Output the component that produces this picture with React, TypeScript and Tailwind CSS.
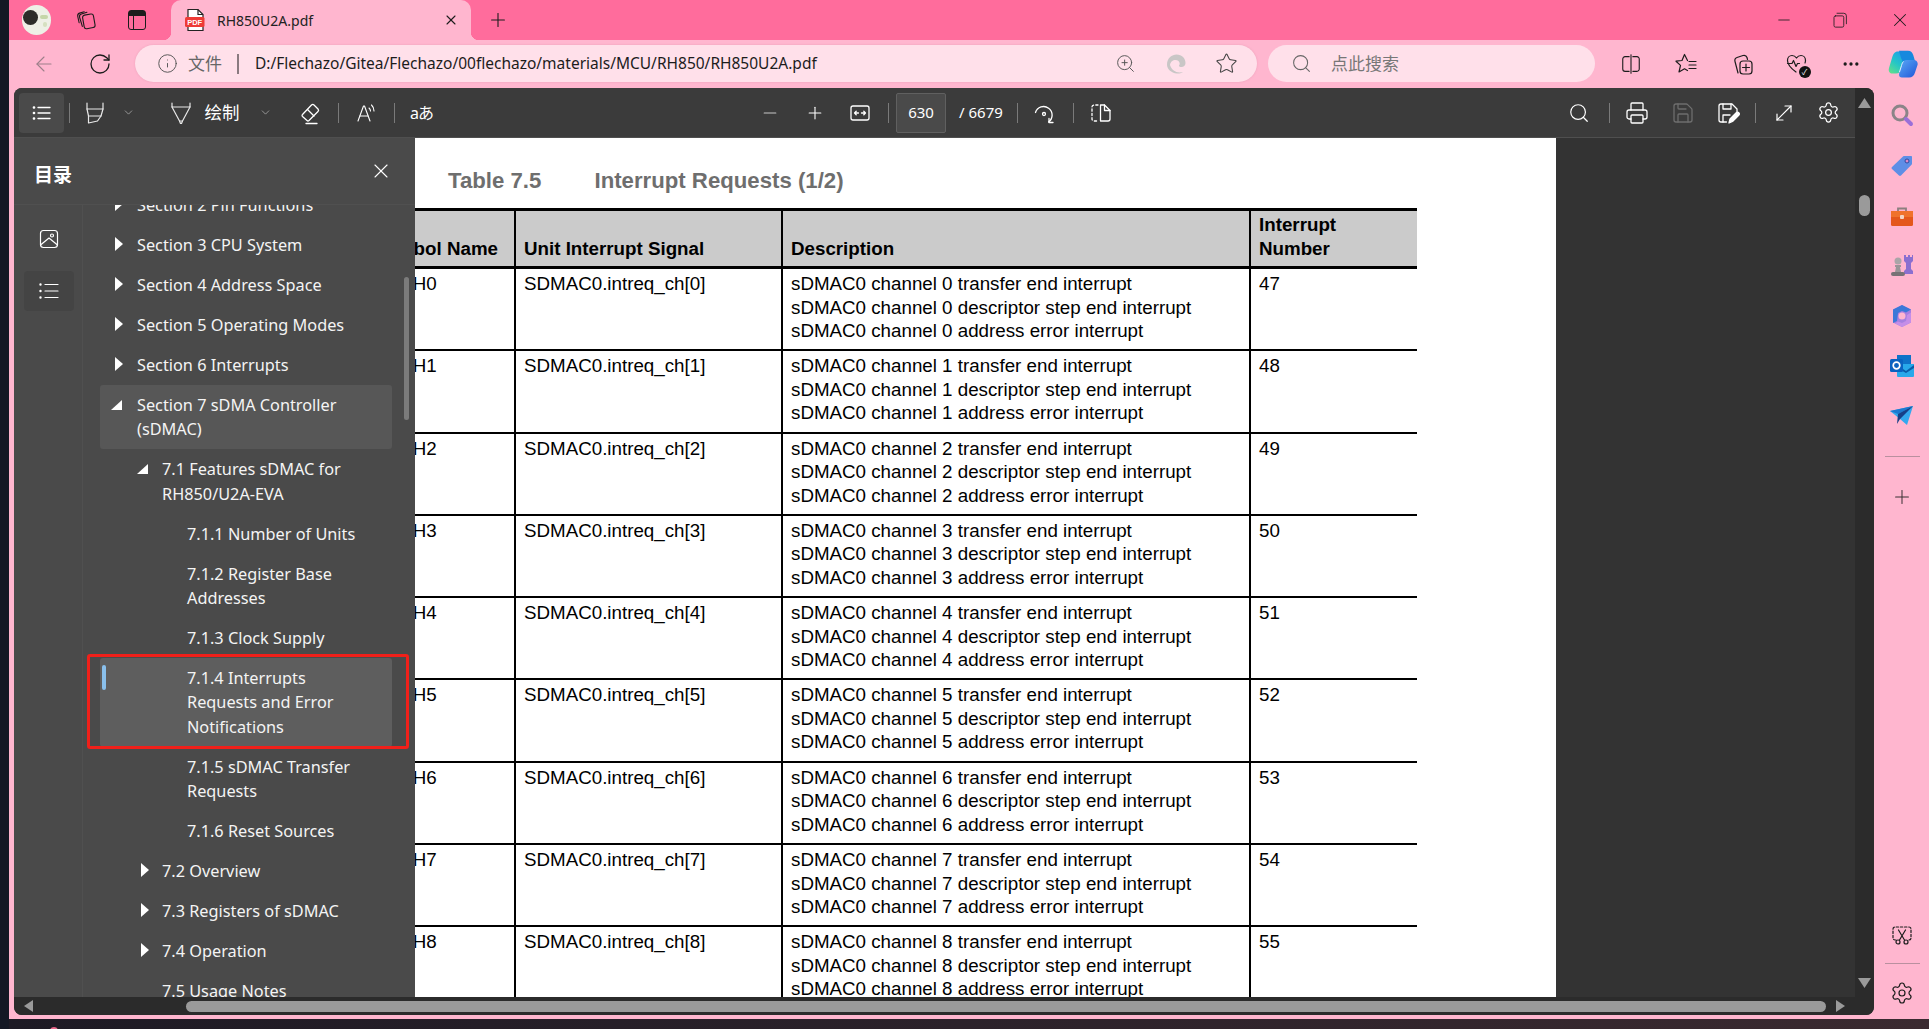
import React from "react";
import { Search, Printer, Save, MoveDiagonal, Settings, ChevronDown, Plus, Minus, X, ArrowLeft, RotateCw, Info, Star, ZoomIn, MoreHorizontal } from "lucide-react";

const UI = "font-['Noto_Sans','Noto_Sans_CJK_SC',sans-serif]";

type P = { className?: string; children?: React.ReactNode; size?: number; sw?: number };
const Ic = ({ className = "", children, size = 24, sw = 1.3 }: P) => (
  <svg width={size} height={size} viewBox="0 0 24 24" fill="none" stroke="currentColor" strokeWidth={sw} strokeLinecap="round" strokeLinejoin="round" className={"shrink-0 " + className}>
    {children}
  </svg>
);

const Sep = ({ className = "" }: { className?: string }) => <div className={"h-5 w-px shrink-0 bg-[#7a7a7a] " + className} />;

const Closed = () => (
  <svg width="8" height="14" viewBox="0 0 8 14" className="shrink-0 mt-[4px]"><polygon points="0,0 8,7 0,14" fill="#fff" /></svg>
);
const Open = () => (
  <svg width="11" height="10" viewBox="0 0 11 10" className="shrink-0 mt-[7px] -ml-[4px]"><polygon points="11,0 11,10 0,10" fill="#fff" /></svg>
);

type Item = { l: number; t: React.ReactNode; a?: "c" | "o"; bg?: string; mark?: boolean };
const items: Item[] = [
  { l: 0, a: "c", t: "Section 2 Pin Functions" },
  { l: 0, a: "c", t: "Section 3 CPU System" },
  { l: 0, a: "c", t: "Section 4 Address Space" },
  { l: 0, a: "c", t: "Section 5 Operating Modes" },
  { l: 0, a: "c", t: "Section 6 Interrupts" },
  { l: 0, a: "o", bg: "bg-[#575757]", t: <>Section 7 sDMA Controller<br />(sDMAC)</> },
  { l: 1, a: "o", t: <>7.1 Features sDMAC for<br />RH850/U2A-EVA</> },
  { l: 2, t: "7.1.1 Number of Units" },
  { l: 2, t: <>7.1.2 Register Base<br />Addresses</> },
  { l: 2, t: "7.1.3 Clock Supply" },
  { l: 2, bg: "bg-[#5e5e5e]", mark: true, t: <>7.1.4 Interrupts<br />Requests and Error<br />Notifications</> },
  { l: 2, t: <>7.1.5 sDMAC Transfer<br />Requests</> },
  { l: 2, t: "7.1.6 Reset Sources" },
  { l: 1, a: "c", t: "7.2 Overview" },
  { l: 1, a: "c", t: "7.3 Registers of sDMAC" },
  { l: 1, a: "c", t: "7.4 Operation" },
  { l: 1, t: "7.5 Usage Notes" },
];

const TocRow = ({ it }: { it: Item }) => (
  <div className={"relative flex rounded-[3px] py-[7.8px] " + (it.bg || "")}>
    {it.mark && <span className="absolute left-[2px] top-[7px] h-[25px] w-1 rounded-sm bg-[#8ac0ec]" />}
    <div className={(it.l === 0 ? "w-[37px] pl-[15px]" : it.l === 1 ? "w-[62px] pl-[41px]" : "w-[87px]") + " shrink-0 flex"}>
      {it.a === "c" && <Closed />}
      {it.a === "o" && <Open />}
    </div>
    <div className="whitespace-nowrap text-[16.3px] leading-[24.4px] text-[#f4f4f4]">{it.t}</div>
  </div>
);

const Panel = () => (
  <aside className={"relative flex h-full w-[401px] shrink-0 flex-col bg-[#4a4a4a] " + UI}>
    <div className="flex h-[67px] shrink-0 items-start justify-between border-b border-[#505050] pl-5 pr-[22px]">
      <div className="mt-[23px] text-[19px] font-bold leading-7 text-white">目录</div>
      <X size={24} strokeWidth={1.1} className="mt-[21px] text-white" />
    </div>
    <div className="flex min-h-0 flex-1">
      <div className="flex w-[69px] shrink-0 flex-col items-center border-r border-[#505050] pl-[1px] pt-[22px]">
        <Ic size={24} className="text-white" sw={1.2}>
          <rect x="3.5" y="3.5" width="17" height="17" rx="3" />
          <circle cx="15" cy="8.5" r="1.5" />
          <path d="M3.5 18l8.5-7 8.500 7" />
        </Ic>
        <div className="mt-[20px] flex h-10 w-[50px] items-center justify-center rounded bg-[#444444]">
          <Ic size={24} className="text-white" sw={1.2}>
            <path d="M8 5.5h13M8 12h13M8 18.5h13" />
            <circle cx="3.5" cy="5.5" r=".6" fill="currentColor" />
            <circle cx="3.5" cy="12" r=".6" fill="currentColor" />
            <circle cx="3.5" cy="18.5" r=".6" fill="currentColor" />
          </Ic>
        </div>
      </div>
      <div className="relative min-w-0 flex-1 overflow-hidden px-[17px]">
        <div className="-mt-[20px] w-[292px]">
          {items.map((it, i) => <TocRow key={i} it={it} />)}
        </div>
        <div className="absolute right-[6px] top-[72px] h-[143px] w-[5px] rounded-full bg-[#7b7b7b]" />
        <div className="absolute left-[4px] top-[449px] h-[95px] w-[322px] rounded-[3px] border-[3px] border-[#f0201a]" />
      </div>
    </div>
  </aside>
);

const rows = Array.from({ length: 9 }, (_, i) => i);
const cell = "border-r-2 border-black pl-2";

const PdfPage = () => (
  <div className="h-full w-[1141px] shrink-0 overflow-hidden bg-white font-['Liberation_Sans',sans-serif] text-[18.75px] leading-[23.5px] text-black">
    <div className="flex pl-[33px] pt-[30px] text-[22.2px] font-bold leading-[26px] text-[#6e6e6e]">
      <span className="w-[146.5px]">Table 7.5</span>
      <span>Interrupt Requests (1/2)</span>
    </div>
    <div className="-ml-[49px] mt-[14px] w-[1051px]">
      <div className="grid h-[61px] grid-cols-[150px_267px_468px_166px] border-y-[3px] border-black bg-[#cbcbcb] font-bold">
        <div className="flex items-end border-r-2 border-black pb-[6px] pl-[8px] whitespace-nowrap">Symbol Name</div>
        <div className={"flex items-end pb-[6px] " + cell}>Unit Interrupt Signal</div>
        <div className={"flex items-end pb-[6px] " + cell}>Description</div>
        <div className="flex flex-col justify-end pb-[6px] pl-2"><span>Interrupt</span><span>Number</span></div>
      </div>
      {rows.map((i) => (
        <div key={i} className="grid h-[82.3px] grid-cols-[150px_267px_468px_166px] border-b-2 border-black">
          <div className="overflow-hidden whitespace-nowrap border-r-2 border-black pl-[3px] pt-[3px]">INTCH{i}</div>
          <div className={"pt-[3px] " + cell}>SDMAC0.intreq_ch[{i}]</div>
          <div className={"pt-[3px] " + cell}>
            <div>sDMAC0 channel {i} transfer end interrupt</div>
            <div>sDMAC0 channel {i} descriptor step end interrupt</div>
            <div>sDMAC0 channel {i} address error interrupt</div>
          </div>
          <div className="pl-2 pt-[3px]">{47 + i}</div>
        </div>
      ))}
    </div>
  </div>
);

const ViewerToolbar = () => (
  <div className={"flex h-[50px] shrink-0 items-center border-b border-[#4f4f4f] bg-[#3b3b3b] pl-[5px] text-white " + UI}>
    <div className="flex h-10 w-[45px] shrink-0 items-center justify-center rounded bg-[#4a4a4a]">
      <Ic size={24} sw={1.3}>
        <path d="M8 6.5h12M8 12h12M8 17.5h12" />
        <circle cx="4" cy="6.5" r=".7" fill="currentColor" />
        <circle cx="4" cy="12" r=".7" fill="currentColor" />
        <circle cx="4" cy="17.5" r=".7" fill="currentColor" />
      </Ic>
    </div>
    <Sep className="ml-[5px]" />
    <Ic className="ml-[13px] text-[#e8e8e8]" sw={1.2}>
      <path d="M4 2v6h16V2" />
      <path d="M4 8l1.500 7h12.500l2-7" />
      <path d="M5.500 15v7l9-2 3.500-5" />
    </Ic>
    <ChevronDown size={13} strokeWidth={1.1} className="ml-[15px] shrink-0 text-[#cfcfcf]" />
    <Ic className="ml-[33.5px] text-[#e8e8e8]" sw={1.2}>
      <path d="M3 2v4h18V2" />
      <path d="M3 6l7.500 14h3L21 6" />
      <path d="M10.500 20l1 2.500h1l1-2.500" />
    </Ic>
    <span className="ml-[12px] w-[36px] shrink-0 whitespace-nowrap text-[17.5px] leading-none">绘制</span>
    <ChevronDown size={13} strokeWidth={1.1} className="ml-[18px] shrink-0 text-[#cfcfcf]" />
    <Ic className="ml-[26px]">
      <path d="M4.500 13.500L13.500 4a1.800 1.800 0 0 1 2.500 0l4 4a1.800 1.800 0 0 1 0 2.500L11 19.500a1.500 1.500 0 0 1-2 0l-4.500-4a1.400 1.400 0 0 1 0-2z" />
      <path d="M9.500 8.500l6.500 6.500" />
      <path d="M8 22.500h11" />
    </Ic>
    <Sep className="ml-[16.5px]" />
    <Ic className="ml-[14.5px]" sw={1.1}>
      <path d="M4 20L9.500 5h1L16 20" />
      <path d="M6 15h8" />
      <path d="M15 7a4 4 0 0 1 1.500 3M17.500 4a8 8 0 0 1 2.500 6" />
    </Ic>
    <Sep className="ml-[16.5px]" />
    <span className="ml-[15px] w-[24px] shrink-0 whitespace-nowrap text-[16px] leading-none tracking-[-1px]">aあ</span>
    <Minus size={20} strokeWidth={1.3} className="ml-[325.5px] shrink-0 text-[#c8c8c8]" />
    <Plus size={20} strokeWidth={1.3} className="ml-[25px] shrink-0" />
    <Ic className="ml-[23.5px]">
      <rect x="3" y="5" width="18" height="14" rx="2" />
      <path d="M6.500 12h4M6.500 12l1.700-1.700M6.500 12l1.700 1.700M17.500 12h-4M17.500 12l-1.700-1.700M17.500 12l-1.700 1.700" />
    </Ic>
    <Sep className="ml-[16px] w-0.5" />
    <div className="ml-[7px] flex h-10 w-[50px] shrink-0 items-center justify-center rounded-[2px] border border-[#606060] bg-[#4a4a4a] text-[15px]">630</div>
    <span className="ml-[13px] w-[42px] shrink-0 whitespace-nowrap text-[15px]">/ 6679</span>
    <Sep className="ml-[15.5px]" />
    <Ic className="ml-[14.5px]">
      <path d="M3.500 11.500a8.500 8.500 0 1 1 13 9.500" />
      <path d="M17 17.500v4h4" />
      <circle cx="12" cy="13" r="1.500" />
    </Ic>
    <Sep className="ml-[17px] w-0.5" />
    <Ic className="ml-[15px]">
      <path d="M9 4H5a2 2 0 0 0-2 2v12a2 2 0 0 0 2 2h4" strokeDasharray="2.200 2.200" />
      <path d="M11.500 4v16h7.500a2 2 0 0 0 2-2V9.500L15.500 4z" />
      <path d="M15.500 4v5.500H21" />
    </Ic>
    <Search size={22} strokeWidth={1.3} className="ml-[455px] shrink-0" />
    <Sep className="ml-[19px] w-0.5" />
    <Printer size={24} strokeWidth={1.3} className="ml-[15px] shrink-0" />
    <Save size={24} strokeWidth={1.3} className="ml-[21.5px] shrink-0 text-[#6e6e6e]" />
    <Ic className="ml-[21.5px]" sw={1.3}>
      <path d="M10.500 21H5a2 2 0 0 1-2-2V5a2 2 0 0 1 2-2h11l5 5v3" />
      <path d="M7 3v5h8V3M7 21v-7h7" />
      <path d="M13 22l1-4 6.500-6.500a1.800 1.800 0 0 1 2.500 2.500L16.500 20.500z" fill="currentColor" />
    </Ic>
    <Sep className="ml-[15px]" />
    <MoveDiagonal size={24} strokeWidth={1.2} className="ml-[16px] shrink-0" />
    <Settings size={23} strokeWidth={1.3} className="ml-[20.5px] shrink-0" />
  </div>
);

const Tri = ({ pts, className = "" }: { pts: string; className?: string }) => (
  <svg width="13" height="12" viewBox="0 0 13 12" className={"shrink-0 " + className}><polygon points={pts} fill="#9a9a9a" /></svg>
);

const Viewer = () => (
  <div className="flex h-[927px] w-[1860px] shrink-0 flex-col overflow-hidden rounded-lg bg-[#2b2b2b]">
    <div className="flex min-h-0 flex-1">
      <div className="flex min-w-0 flex-1 flex-col">
        <ViewerToolbar />
        <div className="flex min-h-0 flex-1 bg-[#333333]">
          <Panel />
          <PdfPage />
        </div>
      </div>
      <div className="flex w-[19px] shrink-0 flex-col items-center bg-[#2b2b2b] pt-[10px]">
        <Tri pts="6.5,0 13,10 0,10" />
        <div className="mt-[85px] h-[21px] w-[11px] rounded-full bg-[#9a9a9a]" />
        <div className="flex-1" />
        <Tri pts="0,0 13,0 6.5,10" className="mb-[7px]" />
      </div>
    </div>
    <div className="flex h-[18px] shrink-0 items-center bg-[#2b2b2b] pl-[10px]">
      <svg width="9" height="12" viewBox="0 0 9 12" className="shrink-0"><polygon points="9,0 9,12 0,6" fill="#9a9a9a" /></svg>
      <div className="ml-[153px] h-[11px] w-[1640px] rounded-full bg-[#9a9a9a]" />
      <svg width="9" height="12" viewBox="0 0 9 12" className="ml-[10px] shrink-0"><polygon points="0,0 9,6 0,12" fill="#9a9a9a" /></svg>
    </div>
  </div>
);

const TabBar = () => (
  <div className={"flex h-10 shrink-0 items-center bg-[#ff6c9c] text-[#1c1c1c] " + UI}>
    <div className="relative ml-[13px] h-[30px] w-[29px] shrink-0 overflow-hidden rounded-full bg-[#eef0e6]">
      <div className="absolute left-[1px] top-[5px] h-[15px] w-[15px] rounded-full bg-[#2d2d2a]" />
      <div className="absolute left-[18px] top-[10px] h-[4px] w-[8px] rounded-full bg-[#c5d6a8]" />
      <div className="absolute left-[21px] top-[17px] h-[5px] w-[4px] rounded-full bg-[#d5e0c0]" />
    </div>
    <Ic size={22} className="ml-[24px]" sw={1.2}>
      <rect x="9" y="6" width="12" height="15" rx="2.500" transform="rotate(-10 15 13)" />
      <path d="M8 19L5 9c-.4-1.500.4-3 2-3.500L13 3.500" />
      <path d="M4.500 15L3 8c-.3-1.500.5-3 2-3.500L10 3" />
    </Ic>
    <div className="ml-[31px] flex h-[20px] w-[18px] shrink-0 flex-col rounded-[3px] border-[1.5px] border-[#1c1c1c]">
      <div className="h-[5px] bg-[#1c1c1c]" />
      <div className="w-[5px] flex-1 border-r border-[#1c1c1c]" />
    </div>
    <div className="relative ml-[25px] flex h-10 w-[300px] shrink-0 items-center rounded-t-[10px] bg-[#ffb6cf]">
      <span className="absolute -left-2 bottom-0 h-2 w-2 bg-[radial-gradient(circle_at_0_0,#ff6c9c_8px,#ffb6cf_8.5px)]" />
      <span className="absolute -right-2 bottom-0 h-2 w-2 bg-[radial-gradient(circle_at_100%_0,#ff6c9c_8px,#ffb6cf_8.5px)]" />
      <svg width="20" height="24" viewBox="0 0 20 24" className="ml-[14px] shrink-0">
        <path d="M3 1.500h10l5 5V22.500H3z" fill="#fff" stroke="#222" strokeWidth="1.200" />
        <path d="M13 1.500v5h5" fill="none" stroke="#222" strokeWidth="1.200" />
        <rect x="0" y="9" width="19.500" height="10" rx="1.500" fill="#ee3b36" />
        <text x="9.700" y="16.800" textAnchor="middle" fontSize="7.500" fontWeight="700" fill="#fff" fontFamily="Liberation Sans">PDF</text>
      </svg>
      <span className="ml-[12px] whitespace-nowrap text-[14px] text-[#222]">RH850U2A.pdf</span>
      <div className="flex-1" />
      <X size={16} strokeWidth={1.6} className="mr-[12px] shrink-0" />
    </div>
    <Plus size={22} strokeWidth={1.2} className="ml-[15.500px] shrink-0" />
    <div className="flex-1" />
    <Minus size={18} strokeWidth={1.100} className="mr-[38px] shrink-0" />
    <Ic size={18} className="mr-[40px]" sw={1.100}>
      <rect x="4" y="6.500" width="13" height="15" rx="2" />
      <path d="M8 3h9a3.500 3.500 0 0 1 3.500 3.500V17" />
    </Ic>
    <X size={22} strokeWidth={1.100} className="mr-[18px] shrink-0" />
  </div>
);

const NavBar = () => (
  <div className={"flex h-12 shrink-0 items-center bg-[#ffb6cf] pb-[1px] text-[#1c1c1c] " + UI}>
    <ArrowLeft size={24} strokeWidth={1.100} className="ml-[23px] shrink-0 text-[#9d7f8a]" />
    <RotateCw size={24} strokeWidth={1.300} className="ml-[32px] shrink-0" />
    <div className="ml-[23px] flex h-[37px] w-[1122px] shrink-0 items-center rounded-full bg-[#ffe0ea] shadow-[0_0_2px_rgba(180,90,120,0.25)]">
      <Info size={21} strokeWidth={1.100} className="ml-[22px] shrink-0 text-[#555]" />
      <span className="ml-[10px] w-[36px] whitespace-nowrap text-[17px] leading-none text-[#666]">文件</span>
      <div className="ml-[13px] h-[20px] w-0.5 bg-[#8a7a80]" />
      <span className="ml-[16px] whitespace-nowrap text-[15.500px] text-[#1c1c1c]">D:/Flechazo/Gitea/Flechazo/00flechazo/materials/MCU/RH850/RH850U2A.pdf</span>
      <div className="flex-1" />
      <ZoomIn size={21} strokeWidth={1.100} className="mr-[28px] shrink-0 text-[#555]" />
      <svg width="24" height="24" viewBox="0 0 24 24" className="mr-[27px] shrink-0"><path d="M3 12.500C3 6 8 2.500 12.500 2.500 18 2.500 21.500 6.500 21.500 11c0 2.500-2 4-4 4-1.500 0-2.500-.5-2.500-1.500 1-1 1-3-.5-4.500-3-2.500-8-.5-8.500 4 2 6 7 8.500 13 7-2.500 1.500-4 1.700-6 1.500C7 21 3 17 3 12.500z" fill="#c9c6c6" /></svg>
      <Star size={23} strokeWidth={1.100} className="mr-[19px] shrink-0 text-[#444]" />
    </div>
    <div className="ml-[11px] flex h-[37px] w-[327px] shrink-0 items-center rounded-full bg-[#ffe0ea]">
      <Search size={21} strokeWidth={1.200} className="ml-[23px] shrink-0 text-[#666]" />
      <span className="ml-[19px] whitespace-nowrap text-[17px] leading-none text-[#777]">点此搜索</span>
    </div>
    <Ic size={22} className="ml-[24.500px]" sw={1.200}>
      <path d="M10 4H5.500A2.500 2.500 0 0 0 3 6.500v11A2.500 2.500 0 0 0 5.500 20H10M14 4h4.500A2.500 2.500 0 0 1 21 6.500v11a2.500 2.500 0 0 1-2.500 2.500H14" />
      <path d="M12 2v20" />
    </Ic>
    <Ic size={24} className="ml-[32px]" sw={1.200}>
      <path d="M13.500 8.500L10.500 2.500 8 8.500 2 9.200l4.500 4.200L5 20l5.500-3.200 3 1.700" />
      <path d="M15 9.500h7M15 13h7M15 16.500h7" />
    </Ic>
    <Ic size={24} className="ml-[32px]" sw={1.200}>
      <path d="M8 21L5 9.500C4.500 7.500 5.500 6 7 5.500L13 3.500c2-.5 3.500.5 4 2l.5 2" />
      <rect x="10" y="9" width="12" height="13" rx="3" />
      <path d="M16 12v7M12.500 15.500h7" />
    </Ic>
    <div className="relative ml-[31px] h-6 w-6 shrink-0">
      <Ic size={24} sw={1.200}>
        <path d="M11 20C7.500 17.500 2.500 13.500 2.500 8.500 2.500 5.500 4.500 3.500 7 3.500c2 0 3.500 1 4.500 2.500 1-1.500 2.500-2.500 4.500-2.500 2.500 0 4.500 2 4.500 5 0 1-.2 1.500-.5 2.500" />
        <path d="M2.500 11.500H7l1.500-3 2.500 6 1.500-3h2" />
      </Ic>
      <div className="absolute -bottom-[2px] -right-[2px] flex h-[12px] w-[12px] items-center justify-center rounded-full bg-[#111] text-[8px] leading-none text-white">✓</div>
    </div>
    <MoreHorizontal size={20} strokeWidth={2} className="ml-[32.500px] shrink-0" />
    <svg width="30" height="28" viewBox="0 0 30 28" className="ml-[27px] shrink-0">
      <defs>
        <linearGradient id="cp1" x1="0.7" y1="0" x2="0.1" y2="1"><stop offset="0" stopColor="#1ea0e8" /><stop offset="0.5" stopColor="#25c6c6" /><stop offset="1" stopColor="#62e08a" /></linearGradient>
        <linearGradient id="cp2" x1="0" y1="0" x2="1" y2="1"><stop offset="0" stopColor="#5aa8f5" /><stop offset="1" stopColor="#1f55d8" /></linearGradient>
      </defs>
      <path d="M10 1.500C6.500 1.500 5.200 4 4.300 7L1 18c-1 3.500.8 5.500 3.500 5.500H8c3 0 4.300-1.500 5-4L17 6c.8-3-.8-4.500-3.500-4.500z" fill="url(#cp1)" />
      <path d="M11 .8h9c3 0 4.500 2 5.300 4.500L27 11h-6c-2.500 0-4 1-4.800 3.500L13 8z" fill="#1689de" />
      <path d="M14 13.500C15 11 16.500 10 19 10h6.500c3 0 4.800 2 4 5L27 22.500c-1 3.200-3 5-6 5h-7c-3 0-3.500-2.500-2.500-5z" fill="url(#cp2)" />
      <path d="M15.500 11.500c-1 1-1.500 2-2 4l-2 6.500" stroke="#dff0ff" strokeWidth="1" fill="none" />
    </svg>
  </div>
);

const RightRail = () => (
  <div className="flex h-[927px] flex-1 flex-col items-center bg-[#ffb6cf] pl-[1px] pt-[15px]">
    <svg width="24" height="24" viewBox="0 0 24 24" className="shrink-0">
      <circle cx="10" cy="10" r="7" fill="none" stroke="#8b8488" strokeWidth="3" />
      <path d="M16 16l5 5" stroke="#9b6fd8" strokeWidth="4" strokeLinecap="round" />
    </svg>
    <svg width="24" height="24" viewBox="0 0 24 24" className="mt-[27px] shrink-0">
      <path d="M2 13L13 2.500c.5-.5 1-.5 1.500-.5H21c.6 0 1 .4 1 1v6.500c0 .5-.2 1-.5 1.300L11 21.500c-.6.6-1.400.6-2 0L2 15c-.6-.6-.6-1.400 0-2z" fill="#5e8ee6" />
      <circle cx="17" cy="7" r="2" fill="#d888c8" stroke="#2d4aa0" />
    </svg>
    <svg width="24" height="24" viewBox="0 0 24 24" className="mt-[27px] shrink-0">
      <path d="M8 7V3.500h8V7" fill="none" stroke="#8d7f7f" strokeWidth="1.800" />
      <rect x="1" y="6" width="22" height="15" rx="1.500" fill="#e4571c" />
      <rect x="1" y="6" width="22" height="6" fill="#f0722c" />
      <rect x="10" y="10" width="4" height="4" rx="1" fill="#f4d4c4" />
    </svg>
    <svg width="24" height="24" viewBox="0 0 24 24" className="mt-[25px] shrink-0">
      <path d="M14 1h2v2h2V1h2v2h2V1h1v6l-2 2v6l2 2v3h-9v-3l2-2V9l-2-2z" fill="#8b6fd0" />
      <circle cx="8" cy="7" r="3.500" fill="#aaa5a8" />
      <path d="M5 11h6v2H10l1 5H5l1-5H5z" fill="#9a9598" />
      <rect x="1" y="18" width="14" height="4" rx="2" fill="#787276" />
    </svg>
    <svg width="24" height="24" viewBox="0 0 24 24" className="mt-[26px] shrink-0">
      <path d="M12 1l9 4.500v13L12 23l-9-4.500v-13z" fill="#a77fe0" />
      <path d="M3 5.500L12 1l9 4.500-5 3-4-1.500-4 2-1 8-4 2z" fill="#3b78d8" />
      <path d="M21 18.500L12 23l-7-3.500 3-2 4 1.500 4-2 1-6 4-2.500z" fill="#c58ee8" />
      <circle cx="12" cy="12" r="3.500" fill="#ffb6cf" />
    </svg>
    <svg width="24" height="24" viewBox="0 0 24 24" className="mt-[26px] shrink-0">
      <rect x="7" y="1" width="14" height="10" fill="#0f72c8" />
      <path d="M7 10h17v12a1 1 0 0 1-1 1H8a1 1 0 0 1-1-1z" fill="#28a8ea" />
      <path d="M7 11l9 6 8-6v3l-8 5-9-5z" fill="#0a5ca8" />
      <rect x="0" y="5" width="13" height="13" rx="1.500" fill="#0a62c0" />
      <circle cx="6.500" cy="11.500" r="3.300" fill="none" stroke="#fff" strokeWidth="1.700" />
    </svg>
    <svg width="24" height="24" viewBox="0 0 24 24" className="mt-[26px] shrink-0">
      <path d="M0 7l23-5-6 19-7-6z" fill="#33a8ee" />
      <path d="M0 7l23-5-15 8z" fill="#1c79d0" />
      <path d="M8 10l15-8-13 13-3 5z" fill="#163f88" />
    </svg>
    <div className="mt-[28px] h-px w-[35px] bg-[#b9909f]" />
    <Plus size={22} strokeWidth={1.100} className="mt-[29px] shrink-0 text-[#3a3034]" />
    <div className="flex-1" />
    <Ic size={24} className="text-[#1c1c1c]" sw={1.200}>
      <path d="M6 17H5a2 2 0 0 1-2-2V6a2 2 0 0 1 2-2h14a2 2 0 0 1 2 2v9a2 2 0 0 1-2 2h-1" strokeDasharray="2.400 1.800" />
      <path d="M8.500 7l6 10M15.500 7l-6 10" />
      <circle cx="8" cy="19" r="2" />
      <circle cx="16" cy="19" r="2" />
    </Ic>
    <div className="mt-[16px] h-px w-[35px] bg-[#b9909f]" />
    <Settings size={24} strokeWidth={1.200} className="mt-[17px] shrink-0 text-[#1c1c1c]" />
    <div className="h-[10px] shrink-0" />
  </div>
);

export default function App() {
  return (
    <div className="flex h-[1029px] w-[1929px] flex-col overflow-hidden bg-[#141824]">
      <div className="flex min-h-0 flex-1">
        <div className="w-[9px] shrink-0 bg-[#141824]" />
        <div className="flex min-w-0 flex-1 flex-col bg-[#ffb6cf]">
          <TabBar />
          <NavBar />
          <div className="flex pl-[5px]">
            <Viewer />
            <RightRail />
          </div>
        </div>
      </div>
      <div className="relative flex h-[14px] shrink-0 overflow-hidden">
        <div className="w-[9px] shrink-0 bg-[#141824]" />
        <div className="h-[4px] flex-1 bg-[#ffb6cf]" />
        <div className="absolute bottom-0 left-[9px] right-0 h-[10px] bg-gradient-to-r from-[#1d1a24] to-[#3a2a30]" />
        <div className="absolute -bottom-[6px] left-[50px] h-[8px] w-[8px] rounded-full bg-[#e9668a]" />
      </div>
    </div>
  );
}
